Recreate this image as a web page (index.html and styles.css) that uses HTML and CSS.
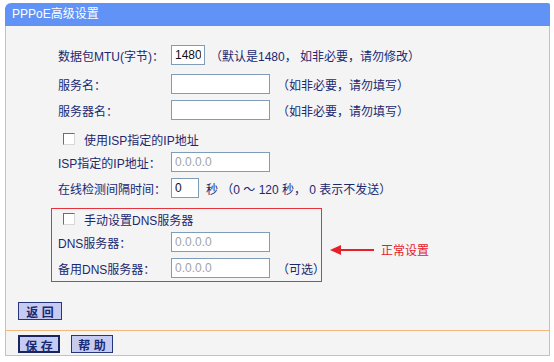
FILE: index.html
```html
<!DOCTYPE html>
<html lang="zh-CN">
  <head>
    <meta charset="utf-8">
    <title>PPPoE高级设置</title>
    <link rel="stylesheet" href="styles.css">
  </head>
  <body>
    <div class="panel">
      <div class="panel-head">PPPoE高级设置</div>
      <div class="panel-body">
        <div class="form">
          <div class="row">
            <span class="label">数据包MTU(字节)：</span>
            <input class="field field-mtu" type="text" value="1480">
            <span class="hint hint-near">（默认是1480， 如非必要，请勿修改）</span>
          </div>
          <div class="row row-gap">
            <span class="label">服务名：</span>
            <input class="field" type="text">
            <span class="hint">（如非必要，请勿填写）</span>
          </div>
          <div class="row">
            <span class="label">服务器名：</span>
            <input class="field" type="text">
            <span class="hint">（如非必要，请勿填写）</span>
          </div>
          <label class="check-row check-gap">
            <input class="check" type="checkbox">
            <span>使用ISP指定的IP地址</span>
          </label>
          <div class="row">
            <span class="label">ISP指定的IP地址：</span>
            <input class="field" type="text" value="0.0.0.0" disabled>
          </div>
          <div class="row">
            <span class="label">在线检测间隔时间：</span>
            <input class="field field-time" type="text" value="0">
            <span class="hint">秒 （0 ～ 120 秒， 0 表示不发送）</span>
          </div>
        </div>

        <div class="dns-line">
          <div class="dns-group">
            <label class="check-row">
              <input class="check" type="checkbox">
              <span>手动设置DNS服务器</span>
            </label>
            <div class="row">
              <span class="label">DNS服务器：</span>
              <input class="field" type="text" value="0.0.0.0" disabled>
            </div>
            <div class="row">
              <span class="label">备用DNS服务器：</span>
              <input class="field" type="text" value="0.0.0.0" disabled>
              <span class="hint">（可选）</span>
            </div>
          </div>
          <div class="note">
            <svg class="arrow" width="44" height="12" viewBox="0 0 44 12">
              <polygon points="0,6 11,1 11,11" fill="#e5202a"/>
              <rect x="10" y="5" width="34" height="2" fill="#e5202a"/>
            </svg>
            <span class="note-text">正常设置</span>
          </div>
        </div>

        <div class="back-row">
          <button class="btn btn-back" type="button">返 回</button>
        </div>
      </div>
      <div class="panel-foot">
        <button class="btn btn-focus" type="button">保 存</button>
        <button class="btn" type="button">帮 助</button>
      </div>
    </div>
  </body>
</html>
```

FILE: styles.css
```css
body {
  margin: 3px 0 0 5px;
  background: #fff;
  font-family: "Liberation Sans", "Noto Sans CJK SC", sans-serif;
  font-size: 12px;
  color: #1b2870;
}
.panel {
  width: 545px;
}
.panel-head {
  height: 23px;
  line-height: 23px;
  padding-left: 7px;
  background: #6192f6;
  color: #fff;
  border-radius: 6px 2px 0 0;
}
.panel-body {
  padding: 16px 0 10px 12px;
  background: #f4f4f4;
  border-left: 1px solid #f4b77a;
  border-right: 1px solid #f4b77a;
}
.form {
  padding-left: 40px;
}
.row {
  display: flex;
  align-items: center;
  height: 26px;
}
.row-gap {
  margin-top: 3px;
}
.label {
  width: 113px;
  flex: none;
}
.field {
  box-sizing: border-box;
  width: 99px;
  height: 20px;
  margin: 0;
  padding: 0 3px;
  border: 1px solid #7f9db9;
  background: #fff;
  font: inherit;
  color: #111;
}
.field:disabled {
  color: #a3a3a3;
}
.field-mtu {
  width: 34px;
}
.field-time {
  width: 28px;
}
.hint {
  margin-left: 7px;
}
.hint-near {
  margin-left: 5px;
}
.check-row {
  display: flex;
  align-items: center;
  gap: 9px;
  height: 20px;
  padding-left: 5px;
}
.check-gap {
  margin-top: 6px;
}
.check {
  appearance: none;
  box-sizing: border-box;
  width: 12px;
  height: 12px;
  margin: 0;
  border: 1px solid;
  border-color: #6d6d6d #d8d8d8 #d8d8d8 #6d6d6d;
  background: #fff;
}
.dns-line {
  display: flex;
  align-items: center;
  margin-top: 7px;
}
.dns-group {
  box-sizing: border-box;
  width: 271px;
  margin-left: 33px;
  padding-left: 6px;
  border: 1px solid #e6323c;
}
.note {
  display: flex;
  align-items: center;
  gap: 7px;
  margin: 9px 0 0 8px;
}
.note-text {
  color: #e5202a;
  font-size: 12px;
}
.back-row {
  margin-top: 20px;
}
.btn {
  box-sizing: border-box;
  width: 42px;
  height: 18px;
  margin: 0;
  padding: 0;
  border: 1px solid #26367a;
  background: #c6cbf2;
  color: #1b2870;
  font: inherit;
  font-weight: bold;
}
.btn-back {
  width: 44px;
}
.btn-focus {
  border: 2px solid #1a2560;
}
.panel-foot {
  display: flex;
  gap: 11px;
  padding: 4px 12px 2px;
  background: #f4f4f4;
  border: 1px solid #f4b77a;
}
```
